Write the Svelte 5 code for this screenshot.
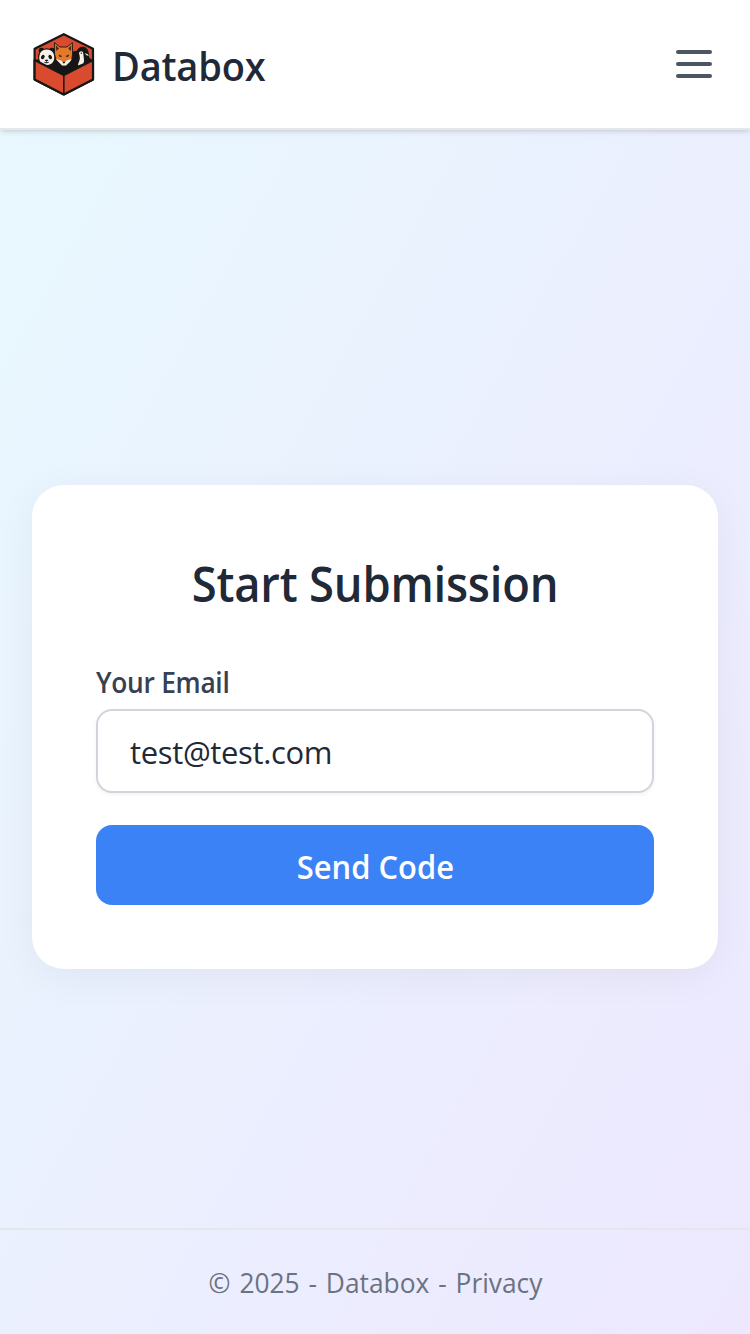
<script>
  let email = $state('test@test.com');
</script>

<div class="page">
  <header>
    <div class="brand">
      <svg class="logo" viewBox="0 0 64 64" aria-hidden="true">
        <path d="M31.8 2.2 61 16.8V47.6L31.8 62.5 2.6 47.6V16.8Z" fill="#d94a2f" stroke="#171717" stroke-width="2.2" stroke-linejoin="round" />
        <path d="M4 28 15 24 32 21 49 18 60 28V34L32 45 4 33Z" fill="#161616" />
        <circle cx="9.5" cy="18.6" r="2.8" fill="#161616" />
        <circle cx="20" cy="18.6" r="2.8" fill="#161616" />
        <circle cx="14.8" cy="25" r="8.7" fill="#161616" />
        <path d="M8 21.5C10 16 19.5 16 21.5 21.5C23.8 27.5 21 33 14.8 33C8 33 6 27.5 8 21.5Z" fill="#f5f1e9" />
        <ellipse cx="10.8" cy="25" rx="1.7" ry="2.4" transform="rotate(28 10.8 25)" fill="#161616" />
        <ellipse cx="18.2" cy="25" rx="1.7" ry="2.4" transform="rotate(-28 18.2 25)" fill="#161616" />
        <path d="M13 28h3.2l-1.6 1.7ZM12 30.2q2.6 1.8 5 0" fill="#161616" stroke="#161616" stroke-width=".5" />
        <path d="M22.5 10.6 28 15H35L40.4 10.6 40.6 22 39.8 27.5 34 33.8H30.5L24 28 22.6 22Z" fill="#e5792a" stroke="#161616" stroke-width=".9" />
        <path d="M23.8 13.3 27 16.5 24.3 19ZM39.3 13.3 36.2 16.5 38.9 19Z" fill="#512416" />
        <path d="M24 27 29 28.5 32 30.5 34.7 28.5 39.6 27 38 29.7 34 33.5H30Z" fill="#f4eee5" />
        <path d="M27 22.8 29.8 24.3 27.7 24.7ZM36.7 22.8 34 24.3 36 24.7Z" fill="#161616" stroke="#161616" stroke-width=".4" />
        <path d="M30.2 29.8h3.4L31.9 31.8Z" fill="#161616" />
        <path d="M44.3 33V21C45.2 16.6 48 14.7 51 14.8 55 15 57 19 57 24V34L46 38Z" fill="#161616" />
        <path d="M47 21.5C47.3 18.5 51 18.2 51.3 21.5 51.4 25 52.8 28.5 51.5 31.2L46 33.5C46.4 30 48.4 28 47.7 24.5Z" fill="#f5f1e9" />
        <path d="M46.5 20.8 43 24.3 47.5 23.6Z" fill="#161616" />
        <circle cx="49.3" cy="21.2" r=".7" fill="#161616" />
        <path d="M52.8 21.6q2.8-.5 4 2.2-2 .3-4-2.2Z" fill="#f5f1e9" />
        <path d="M2.6 28 31.8 43 61 28V47.6L31.8 62.5 2.6 47.6Z" fill="#d94a2f" stroke="#171717" stroke-width="2.2" stroke-linejoin="round" />
        <path d="M31.8 43V62" stroke="#171717" stroke-width="1.6" />
      </svg>
      <span class="name">Databox</span>
    </div>
    <button class="menu" aria-label="Menu">
      <svg viewBox="0 0 24 24" fill="none" stroke="currentColor" stroke-width="2" stroke-linecap="round"><path d="M4 6h16M4 12h16M4 18h16" /></svg>
    </button>
  </header>

  <main>
    <form class="card" onsubmit={(e) => e.preventDefault()}>
      <h1>Start Submission</h1>
      <label for="email">Your Email</label>
      <input id="email" type="email" bind:value={email} />
      <button class="send"><span>Send Code</span></button>
    </form>
  </main>

  <footer><span>© 2025 - Databox - Privacy</span></footer>
</div>

<style>
  :global(body) {
    margin: 0;
  }
  .page {
    box-sizing: border-box;
    min-height: 100vh;
    display: flex;
    flex-direction: column;
    font-family: 'Segoe UI', 'Open Sans', 'Noto Sans', sans-serif;
    color: #1f2937;
    background: linear-gradient(to bottom right, #e8f9ff, #ebf0fe 50%, #ede8fe);
  }
  header {
    height: 128px;
    padding: 0 32px;
    display: flex;
    align-items: center;
    justify-content: space-between;
    background: #fff;
    border-bottom: 2px solid #e5e7eb;
    box-shadow: 0 2px 6px rgba(0, 0, 0, 0.1), 0 2px 4px -2px rgba(0, 0, 0, 0.1);
  }
  .brand {
    display: flex;
    align-items: center;
    gap: 16px;
  }
  .logo {
    width: 64px;
    height: 64px;
  }
  .name {
    padding-top: 4px;
    font-size: 40px;
    line-height: 56px;
    font-weight: 540;
    letter-spacing: -0.2px;
    transform: scaleX(0.95);
    transform-origin: left;
  }
  button {
    border: 0;
    font-family: inherit;
  }
  .menu {
    padding: 0;
    width: 48px;
    height: 48px;
    background: none;
    color: #4b5563;
  }
  .menu svg {
    display: block;
    width: 48px;
    height: 48px;
  }
  main {
    flex: 1;
    display: flex;
    align-items: center;
    padding: 96px 32px 0;
  }
  .card {
    box-sizing: border-box;
    width: 100%;
    height: 484px;
    padding: 64px;
    display: flex;
    flex-direction: column;
    background: #fff;
    border-radius: 32px;
    box-shadow: 0 8px 40px rgba(0, 0, 0, 0.05);
  }
  h1 {
    margin: 0 0 42px;
    padding-top: 3px;
    padding-bottom: 1px;
    font-size: 48px;
    line-height: 64px;
    font-weight: 540;
    letter-spacing: -0.2px;
    text-align: center;
    transform: scaleX(0.945);
  }
  label {
    margin-bottom: 7px;
    padding-top: 3px;
    font-size: 28px;
    line-height: 40px;
    font-weight: 560;
    letter-spacing: -0.3px;
    color: #374151;
    transform: scaleX(0.94);
    transform-origin: left;
  }
  input {
    box-sizing: border-box;
    width: 100%;
    height: 84px;
    padding: 2px 32px 0;
    border: 2px solid #d1d5db;
    border-radius: 16px;
    outline: 0;
    font: 31px 'Segoe UI', 'Open Sans', 'Noto Sans', sans-serif;
    letter-spacing: -0.35px;
    color: #1f2937;
    background: #fff;
    box-shadow: 0 2px 4px rgba(0, 0, 0, 0.05);
  }
  .send {
    height: 80px;
    margin-top: 32px;
    padding-top: 3px;
    border-radius: 16px;
    background: #3b82f6;
    color: #fff;
    font-size: 32px;
    font-weight: 600;
  }
  .send span {
    display: inline-block;
    transform: scaleX(0.965);
  }
  footer {
    padding: 32px;
    border-top: 2px solid #e5e7eb;
    font-size: 28px;
    line-height: 40px;
    text-align: center;
    color: #6b7280;
  }
  footer span {
    display: inline-block;
    padding-left: 2px;
    word-spacing: 2.2px;
    transform: scaleX(0.94);
  }
</style>
